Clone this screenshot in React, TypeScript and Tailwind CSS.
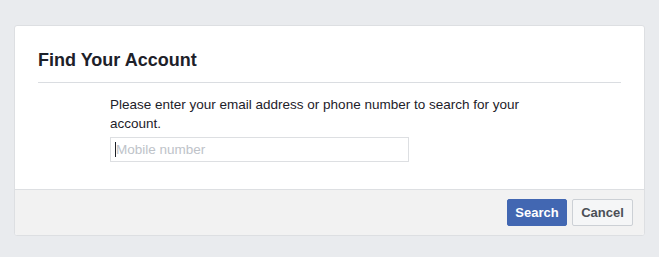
export default function App() {
  return (
    <main
      className="min-h-[257px] bg-[#e9ebee] px-[14px] pt-[25px] pb-[21px]"
      style={{ fontFamily: '"Liberation Sans", Arial, sans-serif' }}
    >
      <div className="bg-white border border-[#dddfe2] rounded-[3px] overflow-hidden">
        {/* Header */}
        <div className="px-[23px] pt-[23px]">
          <h2 className="text-[18px] leading-[22px] font-bold text-[#1d2129]">Find Your Account</h2>
          <div className="border-b border-[#dadde1] mt-[11px]" />
        </div>

        {/* Body */}
        <div className="pl-[95px] pr-[23px] pt-[12px] pb-[27px]">
          <p className="text-[13.5px] leading-[19px] text-[#1d2129] w-[430px]">
            Please enter your email address or phone number to search for your account.
          </p>
          <div className="relative mt-[4px] w-[299px]">
            <input
              type="text"
              placeholder="Mobile number"
              className="w-full h-[25px] border border-[#dddfe2] pl-[5px] text-[13.5px] text-[#1d2129] placeholder:text-[#bec3c9] outline-none"
            />
            <span className="absolute left-[5px] top-[5px] w-px h-[15px] bg-[#1d2129]" />
          </div>
        </div>

        {/* Footer */}
        <div className="bg-[#f2f2f2] border-t border-[#dddfe2] flex justify-end gap-[5px] pt-[9px] pb-[9px] pr-[11px]">
          <button className="w-[60px] h-[27px] bg-[#4267b2] border border-[#4267b2] rounded-[2px] text-white text-[13px] font-bold">
            Search
          </button>
          <button className="w-[61px] h-[27px] bg-[#f5f6f7] border border-[#ccd0d5] rounded-[2px] text-[#4b4f56] text-[13px] font-bold">
            Cancel
          </button>
        </div>
      </div>
    </main>
  );
}
